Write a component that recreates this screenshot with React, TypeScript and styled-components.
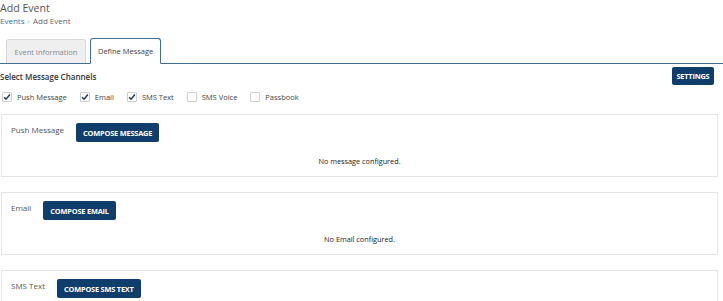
import styled, { createGlobalStyle } from "styled-components";

const GlobalStyle = createGlobalStyle`
  body {
    margin: 0;
    background: #ffffff;
    font-family: "Open Sans", "Noto Sans", sans-serif;
    color: #333333;
  }
`;

type Channel = {
  label: string;
  checked: boolean;
};

type Section = {
  title: string;
  action: string;
  empty: string;
};

const channels: Channel[] = [
  { label: "Push Message", checked: true },
  { label: "Email", checked: true },
  { label: "SMS Text", checked: true },
  { label: "SMS Voice", checked: false },
  { label: "Passbook", checked: false },
];

const sections: Section[] = [
  { title: "Push Message", action: "Compose Message", empty: "No message configured." },
  { title: "Email", action: "Compose Email", empty: "No Email configured." },
  { title: "SMS Text", action: "Compose SMS Text", empty: "No SMS Text configured." },
];

const Page = styled.div`
  width: 723px;
  height: 301px;
  overflow: hidden;
`;

const Title = styled.h1`
  margin: 0;
  padding-top: 1px;
  font-size: 10.6px;
  line-height: 14px;
  font-weight: 400;
  color: #555555;
`;

const Breadcrumbs = styled.div`
  display: flex;
  align-items: center;
  gap: 3px;
  font-size: 8px;
  line-height: 11px;
  color: #666666;
`;

const Crumb = styled.a`
  color: #2e72b0;
  text-decoration: none;
`;

const Separator = styled.span`
  color: #aaaaaa;
`;

const TabBar = styled.div`
  display: flex;
  align-items: flex-end;
  gap: 4px;
  margin-top: 12px;
  padding-left: 6px;
  border-bottom: 1px solid #3e6d96;
`;

const Tab = styled.div<{ $active?: boolean }>`
  display: flex;
  align-items: center;
  justify-content: center;
  box-sizing: border-box;
  height: ${({ $active }) => ($active ? "26px" : "24px")};
  padding: 0 ${({ $active }) => ($active ? "7px" : "7.5px")};
  margin-bottom: ${({ $active }) => ($active ? "-1px" : "0")};
  font-size: 7.5px;
  color: ${({ $active }) => ($active ? "#444444" : "#8a8a8a")};
  background: ${({ $active }) => ($active ? "#ffffff" : "#efefef")};
  border: 1px solid ${({ $active }) => ($active ? "#3e6d96" : "#d8d8d8")};
  border-bottom: ${({ $active }) => ($active ? "1px solid #ffffff" : "none")};
  border-radius: 3px 3px 0 0;
`;

const Content = styled.div`
  padding: 3px 5px 0 1px;
`;

const ChannelsHeader = styled.div`
  display: flex;
  align-items: center;
  justify-content: space-between;
`;

const SectionTitle = styled.div`
  margin-left: -1px;
  font-size: 8px;
  font-weight: 600;
  color: #333333;
`;

const Button = styled.button<{ $height?: number }>`
  box-sizing: border-box;
  height: ${({ $height }) => $height ?? 19}px;
  padding: 0 7px;
  border: none;
  border-radius: 2px;
  background: #0f3e6c;
  color: #ffffff;
  font-family: "Open Sans", "Noto Sans", sans-serif;
  font-size: 7.4px;
  font-weight: 700;
  letter-spacing: -0.2px;
  text-transform: uppercase;
  white-space: nowrap;
`;

const SettingsButton = styled(Button)`
  margin-right: 4px;
  padding: 0 4.5px;
`;

const ChannelList = styled.div`
  display: flex;
  align-items: center;
  gap: 13px;
  margin-top: 7px;
  padding-left: 1px;
`;

const ChannelOption = styled.label`
  display: flex;
  align-items: center;
  gap: 5px;
  font-size: 7.5px;
  color: #444444;
`;

const Box = styled.span`
  display: flex;
  align-items: center;
  justify-content: center;
  box-sizing: border-box;
  width: 10px;
  height: 10px;
  border: 1px solid #cfcfcf;
  border-radius: 1px;
  background: #ffffff;
`;

const Panels = styled.div`
  display: flex;
  flex-direction: column;
  gap: 15px;
  margin-top: 12px;
`;

const Panel = styled.section`
  box-sizing: border-box;
  padding: 8px 9px 9px;
  border: 1px solid #e4e4e4;
`;

const PanelHeader = styled.div`
  display: flex;
  align-items: flex-start;
  gap: 12px;
`;

const PanelTitle = styled.div`
  padding-top: 1px;
  font-size: 8px;
  line-height: 12px;
  color: #555555;
`;

const EmptyText = styled.div`
  margin-top: 13px;
  text-align: center;
  font-size: 7.3px;
  line-height: 12px;
  color: #222222;
`;

function CheckMark() {
  return (
    <svg width="9" height="8" viewBox="0 0 9 8">
      <path d="M1.2 4.2 L3.4 6.4 L7.8 1.2" fill="none" stroke="#1d3a5c" strokeWidth="1.6" />
    </svg>
  );
}

function App() {
  return (
    <Page>
      <GlobalStyle />
      <Title>Add Event</Title>
      <Breadcrumbs>
        <Crumb href="#">Events</Crumb>
        <Separator>›</Separator>
        <span>Add Event</span>
      </Breadcrumbs>

      <TabBar>
        <Tab>Event Information</Tab>
        <Tab $active>Define Message</Tab>
      </TabBar>

      <Content>
        <ChannelsHeader>
          <SectionTitle>Select Message Channels</SectionTitle>
          <SettingsButton $height={18}>Settings</SettingsButton>
        </ChannelsHeader>

        <ChannelList>
          {channels.map(channel => (
            <ChannelOption key={channel.label}>
              <Box>{channel.checked && <CheckMark />}</Box>
              {channel.label}
            </ChannelOption>
          ))}
        </ChannelList>

        <Panels>
          {sections.map(section => (
            <Panel key={section.title}>
              <PanelHeader>
                <PanelTitle>{section.title}</PanelTitle>
                <Button>{section.action}</Button>
              </PanelHeader>
              <EmptyText>{section.empty}</EmptyText>
            </Panel>
          ))}
        </Panels>
      </Content>
    </Page>
  );
}

export default App;
